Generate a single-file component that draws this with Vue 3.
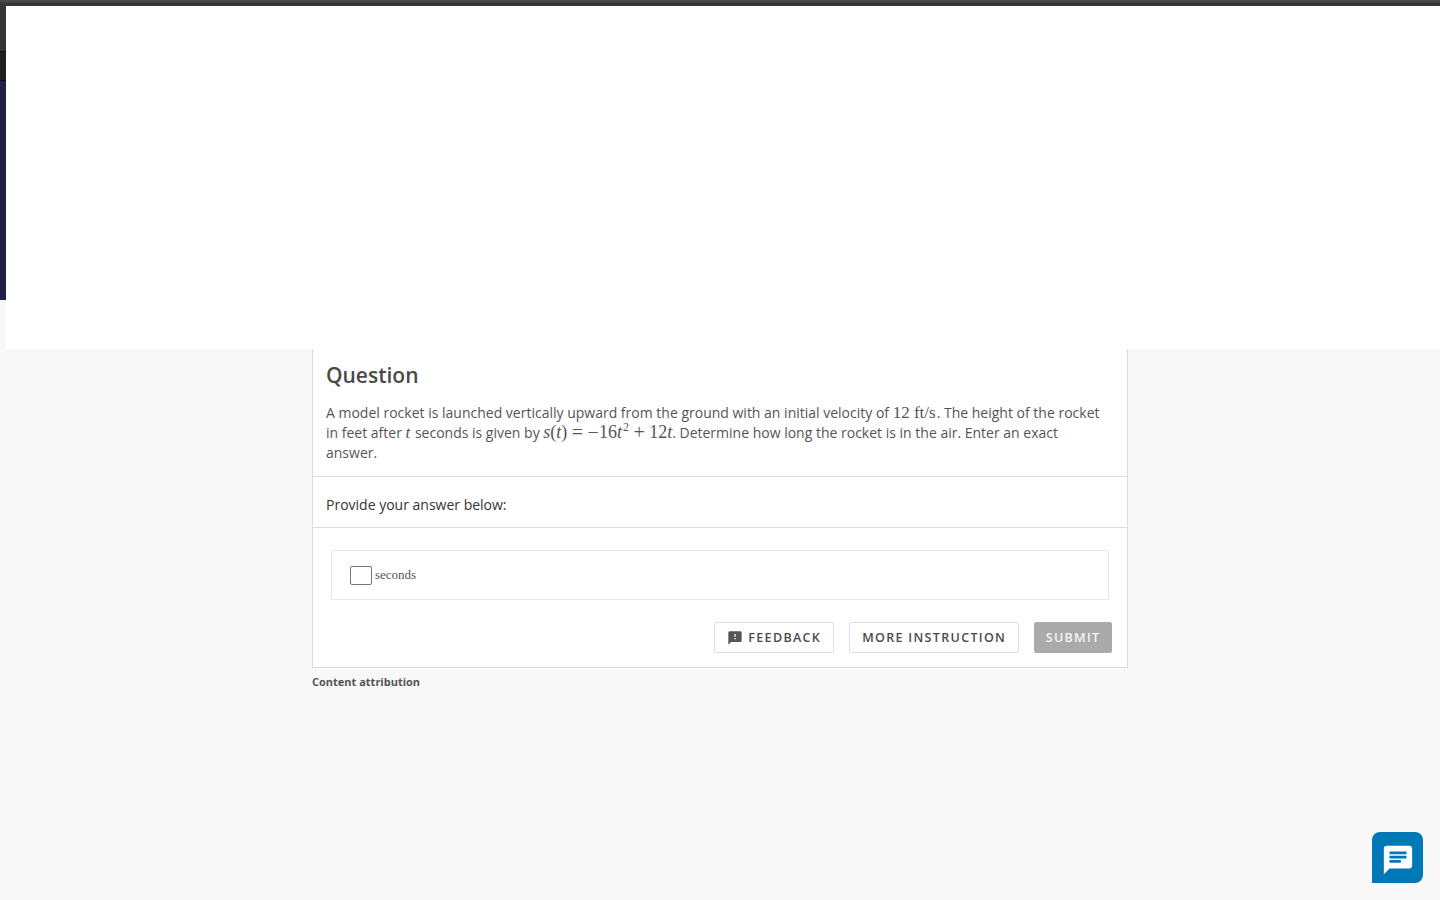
<template>
  <div class="page">
    <header class="top-band">
      <div class="band-title"></div>
      <div class="band-nav"></div>
      <div class="band-hero"></div>
    </header>
    <div class="overlay-panel"></div>

    <main class="content">
      <section class="card">
        <div class="question">
          <h2 class="question-title">Question</h2>
          <p class="question-text">
            A model rocket is launched vertically upward from the ground with an initial velocity of
            <span class="math units">12 ft/s</span>. The height of the rocket in feet after
            <span class="math units"><i>t</i></span> seconds is given by
            <span class="math"><i>s</i>(<i>t</i>)<span class="op">=</span><span class="minus">−</span>16<i>t</i><sup>2</sup><span class="op">+</span>12<i>t</i></span>. Determine how long the rocket is in the air. Enter an exact answer.
          </p>
        </div>
        <div class="prompt">Provide your answer below:</div>
        <div class="answer-area">
          <div class="answer-box">
            <span class="answer-input"></span>
            <span class="answer-unit">seconds</span>
          </div>
        </div>
        <div class="actions">
          <button class="btn btn-feedback">
            <svg class="btn-icon" viewBox="0 0 24 24" width="16" height="16">
              <path fill="#555" d="M20 2H4c-1.1 0-2 .9-2 2v18l4-4h14c1.1 0 2-.9 2-2V4c0-1.1-.9-2-2-2zm-7 12h-2v-2h2v2zm0-4h-2V6h2v4z" />
            </svg>
            FEEDBACK
          </button>
          <button class="btn">MORE INSTRUCTION</button>
          <button class="btn btn-disabled">SUBMIT</button>
        </div>
      </section>
      <div class="attribution">Content attribution</div>
    </main>

    <button class="chat-button" aria-label="Chat">
      <svg viewBox="0 0 24 24" width="34" height="34">
        <path fill="#fff" d="M20 2H4c-1.1 0-2 .9-2 2v18l4-4h14c1.1 0 2-.9 2-2V4c0-1.1-.9-2-2-2zM6 9h12v2H6V9zm8 5H6v-2h8v2zm4-6H6V6h12v2z" />
      </svg>
    </button>
  </div>
</template>

<script setup>
</script>

<style>
html,
body {
  margin: 0;
  background: #f8f8f8;
}
</style>

<style scoped>
.page {
  position: relative;
  height: 900px;
  overflow: hidden;
  background: #f8f8f8;
  font-family: "Open Sans", "Noto Sans", sans-serif;
  color: #4a4a4a;
}

.top-band {
  display: flex;
  flex-direction: column;
  height: 300px;
}

.band-title {
  height: 52px;
  background: linear-gradient(180deg, #484848 0, #484848 2px, #373737 3px, #333 100%);
  border-bottom: 1px solid #111;
  box-sizing: border-box;
}

.band-nav {
  height: 29px;
  background: #1f1f1f;
  border-bottom: 1px solid #0c0c0c;
  box-sizing: border-box;
}

.band-hero {
  flex: 1;
  background: #1f1f45;
}

/* blank white sheet lying over the header */
.overlay-panel {
  position: absolute;
  left: 6px;
  top: 6px;
  right: 0;
  height: 343px;
  background: #fff;
  z-index: 2;
}

.content {
  width: 816px;
  margin: 40px auto 0;
}

.card {
  background: #fff;
  border: 1px solid #ddd;
  box-sizing: border-box;
  height: 328px;
}

.question {
  padding: 19px 20px 0 13px;
  border-bottom: 1px solid #ddd;
  height: 136px;
  box-sizing: border-box;
}

.question-title {
  margin: 0 0 13px;
  font-size: 21px;
  line-height: 30px;
  font-weight: 600;
  color: #4a4a4a;
}

.question-text {
  margin: 0;
  font-size: 14px;
  line-height: 20px;
  color: #555;
}

.math {
  font-family: "Liberation Serif", serif;
  font-size: 18px;
  line-height: 0;
}

.math.units {
  margin-right: 1px;
  font-size: 17px;
}

.math sup {
  margin-left: 1px;
  font-size: 12px;
  line-height: 0;
}

.op {
  margin: 0 4.5px;
  font-size: 20px;
  vertical-align: -1px;
}

.minus {
  font-size: 20px;
  vertical-align: -1px;
}

.prompt {
  height: 51px;
  box-sizing: border-box;
  padding: 18px 13px 0;
  font-size: 14px;
  line-height: 20px;
  color: #333;
  border-bottom: 1px solid #ddd;
}

.answer-area {
  padding: 22px 18px 0;
}

.answer-box {
  display: flex;
  align-items: center;
  gap: 3px;
  width: 778px;
  height: 50px;
  box-sizing: border-box;
  padding-left: 18px;
  border: 1px solid #e6e6e6;
  border-radius: 2px;
}

.answer-input {
  width: 22px;
  height: 19px;
  box-sizing: border-box;
  background: #fff;
  border: 1px solid #767676;
  border-radius: 2px;
}

.answer-unit {
  font-family: "Liberation Serif", serif;
  font-size: 13px;
  color: #555;
}

.actions {
  display: flex;
  justify-content: flex-end;
  gap: 15px;
  padding: 22px 15px 0 0;
}

.btn {
  display: flex;
  align-items: center;
  gap: 5px;
  height: 31px;
  box-sizing: border-box;
  padding: 0 12px;
  background: #fff;
  border: 1px solid #ddd;
  border-radius: 2px;
  font-family: "Open Sans", "Noto Sans", sans-serif;
  font-size: 12.5px;
  font-weight: 600;
  letter-spacing: 1.33px;
  color: #4a4a4a;
}

.btn-icon {
  flex: none;
}

.btn-disabled {
  padding: 0 10.5px;
  background: #aaa;
  border-color: #aaa;
  color: #f4f4f4;
}

.attribution {
  margin-top: 6px;
  font-size: 11px;
  line-height: 15px;
  font-weight: 700;
  color: #555;
}

.chat-button {
  position: absolute;
  left: 1372px;
  top: 832px;
  display: flex;
  align-items: center;
  justify-content: center;
  width: 51px;
  height: 51px;
  padding: 5px 0 0;
  border: 0;
  border-radius: 8px 8px 8px 0;
  background: #0077b6;
}
</style>
